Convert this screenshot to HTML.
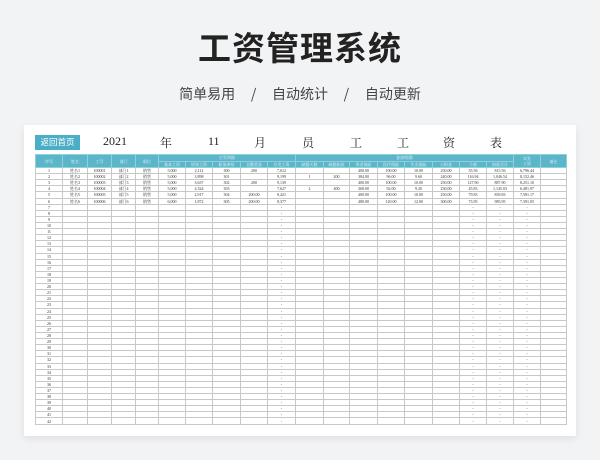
<!DOCTYPE html>
<html><head><meta charset="utf-8"><style>
*{margin:0;padding:0;box-sizing:border-box}
body{width:600px;height:460px;background:#f2f3f5;font-family:"Liberation Sans","Noto Sans CJK SC",sans-serif;position:relative;overflow:hidden}
.t{position:absolute;left:0;width:600px;text-align:center;top:22px;font-size:33px;font-weight:bold;color:#222;letter-spacing:1px;font-family:"Noto Sans CJK SC",sans-serif}
.s{position:absolute;left:0;width:600px;text-align:center;top:84px;font-size:14px;color:#444;font-family:"Noto Sans CJK SC",sans-serif}
.card{position:absolute;left:24px;top:125px;width:552px;height:311px;background:#fff;box-shadow:0 3px 8px rgba(0,0,0,.08)}
.btn{position:absolute;left:35px;top:135px;width:45px;height:15px;background:#4aaec6;color:#fff;font-size:8.5px;line-height:15px;text-align:center;font-family:"Noto Sans CJK SC",sans-serif}
.h{position:absolute;top:134px;font-size:12px;color:#222;font-family:"Liberation Serif","Noto Serif CJK SC",serif}
table{position:absolute;left:35px;top:154px;border-collapse:collapse;table-layout:fixed;width:531px;font-family:"Liberation Serif","Noto Serif CJK SC",serif}
td{border:0.6px solid #c8c8c8;font-size:4px;line-height:5px;height:6.12px;text-align:center;color:#333;padding:0;white-space:nowrap;overflow:hidden}
tr.hd td{background:#5bb6c9;color:#e8f6fa;border-color:#8fd0dd;height:6.5px}
</style></head><body>
<div class="t">工资管理系统</div>
<div class="s">简单易用&nbsp;&nbsp;&nbsp;&nbsp;&nbsp;/&nbsp;&nbsp;&nbsp;&nbsp;&nbsp;自动统计&nbsp;&nbsp;&nbsp;&nbsp;&nbsp;/&nbsp;&nbsp;&nbsp;&nbsp;&nbsp;自动更新</div>
<div class="card"></div>
<div class="btn">返回首页</div>
<div class="h" style="left:103px">2021</div>
<div class="h" style="left:160px">年</div>
<div class="h" style="left:208px">11</div>
<div class="h" style="left:254px">月</div>
<div class="h" style="left:302px">员</div>
<div class="h" style="left:350px">工</div>
<div class="h" style="left:397px">工</div>
<div class="h" style="left:443px">资</div>
<div class="h" style="left:490px">表</div>
<table>
<colgroup><col style="width:27px"><col style="width:25px"><col style="width:24px"><col style="width:24px"><col style="width:23px"><col style="width:27px"><col style="width:27px"><col style="width:28px"><col style="width:27px"><col style="width:28px"><col style="width:28px"><col style="width:26px"><col style="width:28px"><col style="width:27px"><col style="width:28px"><col style="width:27px"><col style="width:27px"><col style="width:27px"><col style="width:27px"><col style="width:26px"></colgroup>
<tr class="hd"><td rowspan="2">序号</td><td rowspan="2">姓名</td><td rowspan="2">工号</td><td rowspan="2">部门</td><td rowspan="2">职位</td><td colspan="5">应发明细</td><td colspan="8">扣款明细</td><td rowspan="2">实发<br>工资</td><td rowspan="2">备注</td></tr>
<tr class="hd"><td>基本工资</td><td>绩效工资</td><td>职务津贴</td><td>全勤奖金</td><td>应发工资</td><td>缺勤天数</td><td>缺勤扣款</td><td>养老保险</td><td>医疗保险</td><td>失业保险</td><td>公积金</td><td>个税</td><td>扣款合计</td></tr>
<tr><td>1</td><td>姓名1</td><td>100001</td><td>部门1</td><td>销售</td><td>5,000</td><td>2,112</td><td>300</td><td>200</td><td>7,612</td><td></td><td></td><td>400.00</td><td>100.00</td><td>10.00</td><td>250.00</td><td>55.56</td><td>815.56</td><td>6,796.44</td><td></td></tr>
<tr><td>2</td><td>姓名2</td><td>100002</td><td>部门2</td><td>销售</td><td>5,000</td><td>3,898</td><td>301</td><td></td><td>9,199</td><td>1</td><td>200</td><td>384.00</td><td>96.00</td><td>9.60</td><td>240.00</td><td>116.94</td><td>1,046.54</td><td>8,152.46</td><td></td></tr>
<tr><td>3</td><td>姓名3</td><td>100003</td><td>部门3</td><td>销售</td><td>5,000</td><td>3,637</td><td>302</td><td>200</td><td>9,139</td><td></td><td></td><td>400.00</td><td>100.00</td><td>10.00</td><td>250.00</td><td>127.90</td><td>887.90</td><td>8,251.10</td><td></td></tr>
<tr><td>4</td><td>姓名4</td><td>100004</td><td>部门4</td><td>销售</td><td>5,000</td><td>2,324</td><td>303</td><td></td><td>7,627</td><td>2</td><td>400</td><td>368.00</td><td>92.00</td><td>9.20</td><td>230.00</td><td>45.83</td><td>1,145.03</td><td>6,481.97</td><td></td></tr>
<tr><td>5</td><td>姓名5</td><td>100005</td><td>部门5</td><td>销售</td><td>5,000</td><td>2,917</td><td>304</td><td>200.00</td><td>8,421</td><td></td><td></td><td>400.00</td><td>100.00</td><td>10.00</td><td>250.00</td><td>79.83</td><td>839.83</td><td>7,581.17</td><td></td></tr>
<tr><td>6</td><td>姓名6</td><td>100006</td><td>部门6</td><td>销售</td><td>6,000</td><td>1,872</td><td>305</td><td>200.00</td><td>8,377</td><td></td><td></td><td>480.00</td><td>120.00</td><td>12.00</td><td>300.00</td><td>73.95</td><td>985.95</td><td>7,391.05</td><td></td></tr>
<script>
for(var i=7;i<=42;i++){document.write('<tr><td>'+i+'</td><td></td><td></td><td></td><td></td><td></td><td></td><td></td><td></td><td>-</td><td></td><td></td><td></td><td></td><td></td><td></td><td>-</td><td>-</td><td>-</td><td></td></tr>');}
</script>
</table>
</body></html>
